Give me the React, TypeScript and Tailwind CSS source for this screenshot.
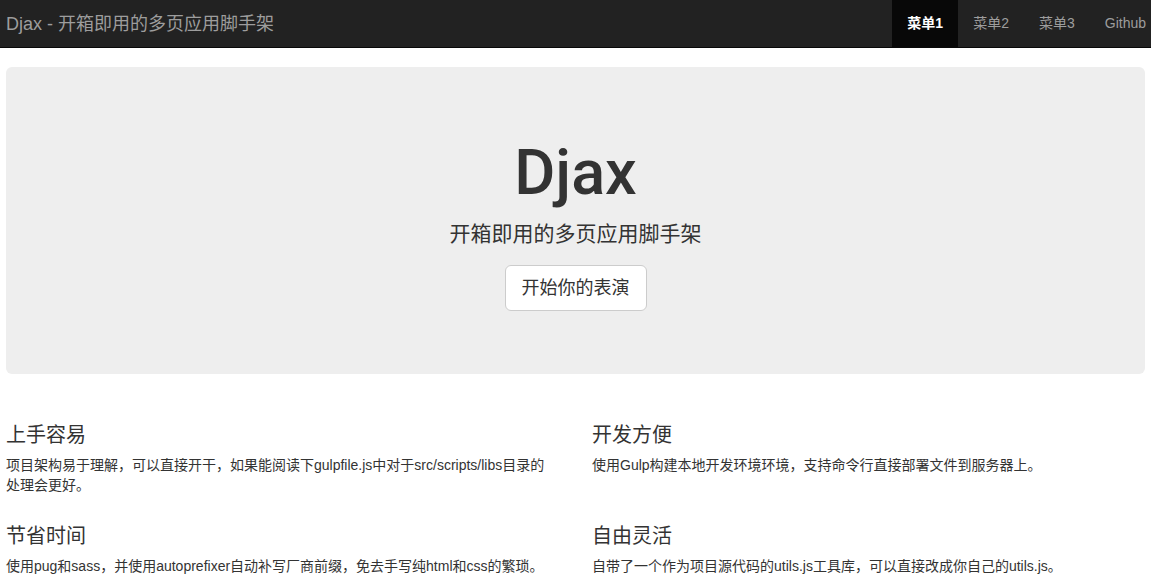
const font = "font-['Liberation_Sans','Noto_Sans_CJK_SC',sans-serif]";

const navItems = ["菜单1", "菜单2", "菜单3", "Github"];

// lines are broken where the reference wraps them
const features = [
    {
        title: "上手容易",
        lines: ["项目架构易于理解，可以直接开干，如果能阅读下gulpfile.js中对于src/scripts/libs目录的", "处理会更好。"],
    },
    {
        title: "开发方便",
        lines: ["使用Gulp构建本地开发环境环境，支持命令行直接部署文件到服务器上。"],
    },
    {
        title: "节省时间",
        lines: ["使用pug和sass，并使用autoprefixer自动补写厂商前缀，免去手写纯html和css的繁琐。"],
    },
    {
        title: "自由灵活",
        lines: ["自带了一个作为项目源代码的utils.js工具库，可以直接改成你自己的utils.js。"],
    },
];

function Navbar() {
    return (
        <nav className="flex items-stretch justify-between h-[48px] bg-[#222] border-b border-[#080808] pl-[6px] overflow-hidden">
            <a href="#" className="flex items-center text-[18px] text-[#9d9d9d] leading-none">
                Djax - 开箱即用的多页应用脚手架
            </a>
            <ul className="flex items-stretch -mr-[10px]">
                {navItems.map((item, i) => (
                    <li key={item}>
                        <a
                            href="#"
                            className={
                                i === 0
                                    ? "flex items-center h-full px-[15px] text-[14px] bg-[#080808] text-white font-bold"
                                    : "flex items-center h-full px-[15px] text-[14px] text-[#9d9d9d]"
                            }
                        >
                            {item}
                        </a>
                    </li>
                ))}
            </ul>
        </nav>
    );
}

function Jumbotron() {
    return (
        <section className="flex flex-col items-center bg-[#eee] rounded-[6px] mt-[19px] pt-[71px] pb-[63px] text-center">
            <h1 className="font-['Roboto',sans-serif] font-medium text-[63px] leading-[69px] text-[#333]">Djax</h1>
            <p className="mt-[12px] text-[21px] leading-[30px] text-[#333]">开箱即用的多页应用脚手架</p>
            <button className="mt-[16px] px-[16px] py-[10px] text-[18px] leading-[24px] text-[#333] bg-white border border-[#ccc] rounded-[6px]">
                开始你的表演
            </button>
        </section>
    );
}

export default function App() {
    return (
        <div className={`${font} bg-white min-h-[584px] text-[#333]`}>
            <Navbar />
            <main className="px-[6px]">
                <Jumbotron />
                <div className="grid grid-cols-2 gap-x-[33px] gap-y-[27px] mt-[47px]">
                    {features.map((f) => (
                        <div key={f.title} className="min-w-0">
                            <h3 className="text-[20px] leading-[28px]">{f.title}</h3>
                            <p className="mt-[6px] text-[14px] leading-[20px]">
                                {f.lines.map((line) => (
                                    <span key={line} className="block whitespace-nowrap">
                                        {line}
                                    </span>
                                ))}
                            </p>
                        </div>
                    ))}
                </div>
            </main>
        </div>
    );
}
